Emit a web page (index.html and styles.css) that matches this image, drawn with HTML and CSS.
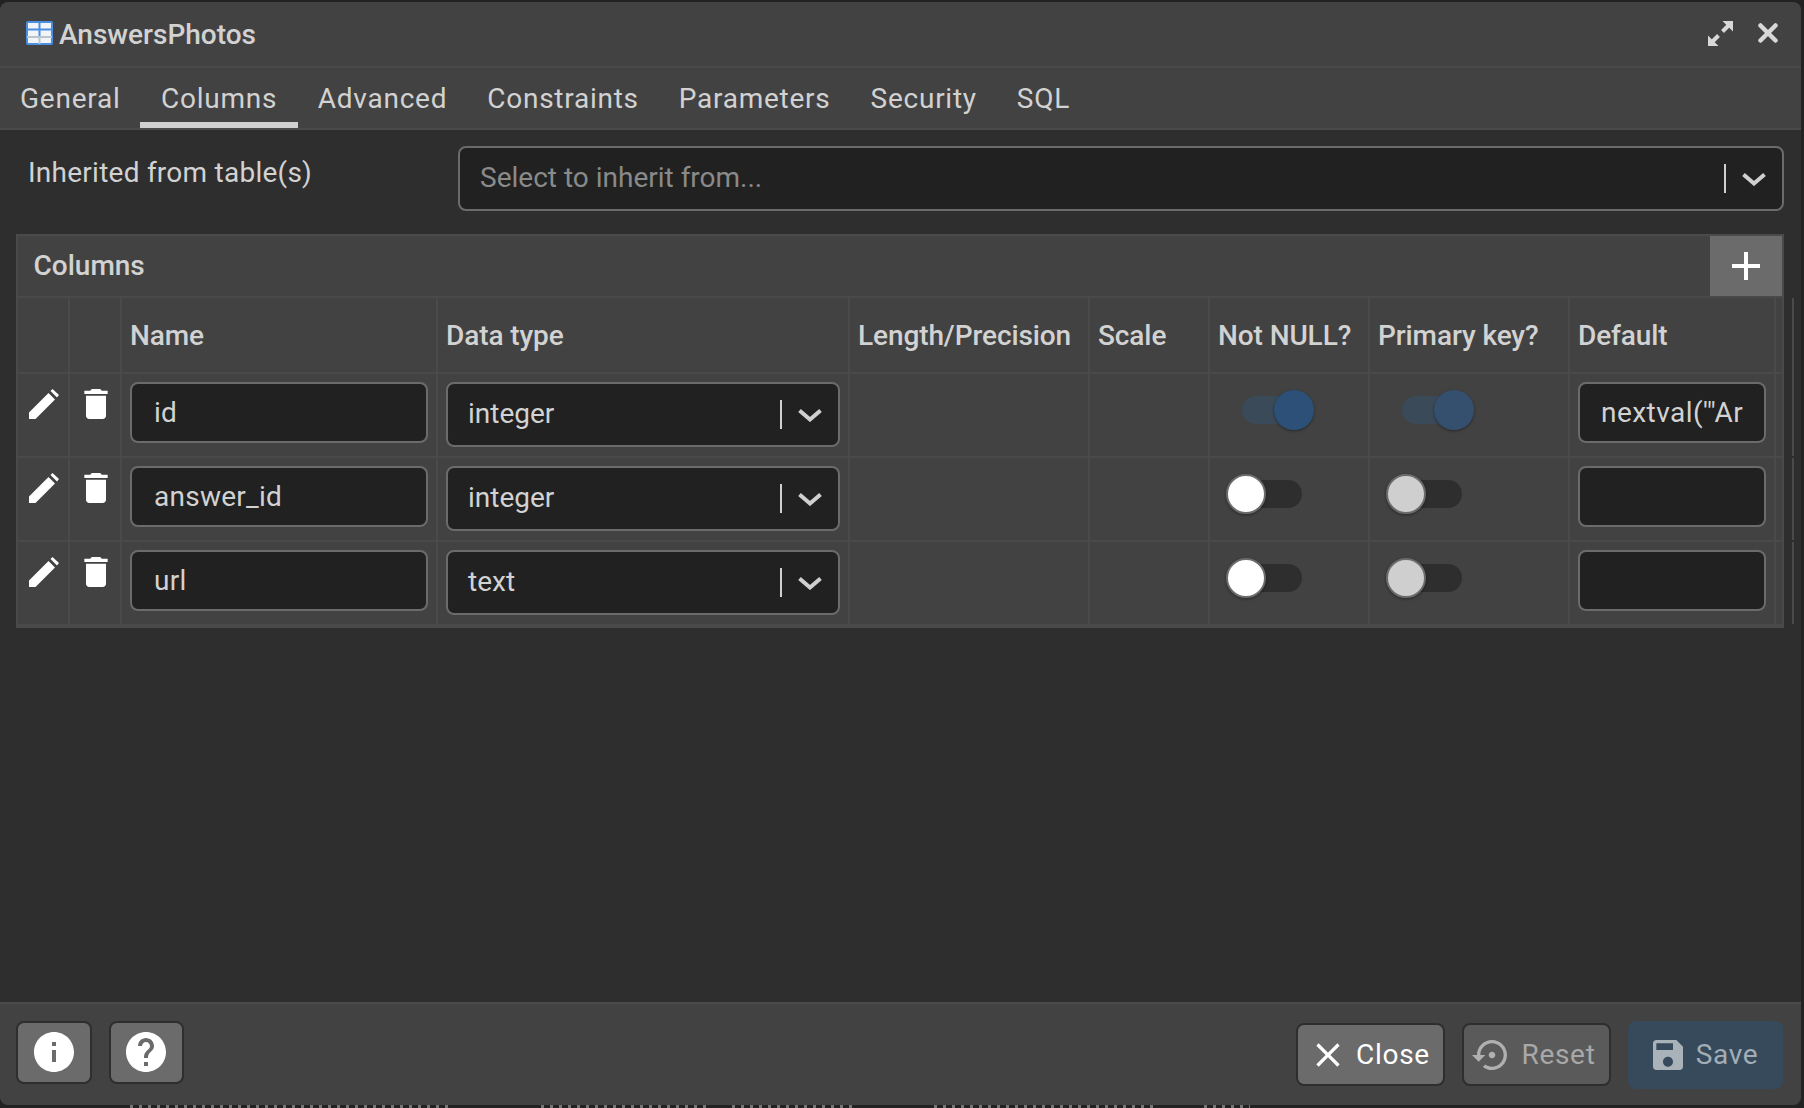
FILE: index.html
```html
<!DOCTYPE html>
<html lang="en">
<head>
  <meta charset="UTF-8">
  <title>AnswersPhotos</title>
  <link rel="stylesheet" href="styles.css">
</head>
<body>
  <div class="dialog">
    <div class="titlebar">
      <svg class="table-icon" viewBox="0 0 27 24"><rect x="1" y="1" width="25" height="22" rx="1" fill="#f2f4f6" stroke="#4a90e2" stroke-width="2"/><path d="M13.500 1v15M1 8.500h25" stroke="#4a90e2" stroke-width="2"/><path d="M1 16h25M13.500 16v7" stroke="#b8c4d0" stroke-width="2"/></svg>
      <span class="title">AnswersPhotos</span>
      <svg class="expand-icon" viewBox="0 0 25 25"><path d="M4 21 10.500 14.500M14.500 10.500 21 4" stroke="#d8d8d8" stroke-width="4"/><path d="M0 25V14.500L10.500 25zM25 0V10.500L14.500 0z" fill="#d8d8d8"/></svg>
      <svg class="close-icon" viewBox="0 0 20 20"><path d="M2.500 2.500 17.500 17.500M17.500 2.500 2.500 17.500" stroke="#d8d8d8" stroke-width="4.500" stroke-linecap="round"/></svg>
    </div>

    <div class="tabs">
      <div class="tab">General</div>
      <div class="tab active">Columns</div>
      <div class="tab">Advanced</div>
      <div class="tab">Constraints</div>
      <div class="tab">Parameters</div>
      <div class="tab">Security</div>
      <div class="tab">SQL</div>
    </div>

    <div class="content">
      <div class="inherit-row">
        <label class="inherit-label">Inherited from table(s)</label>
        <div class="select select-wide">
          <span class="select-text placeholder">Select to inherit from...</span>
          <i class="select-sep"></i>
          <svg class="chevron" viewBox="0 0 24 14"><path d="M1.500 2.500 12 11.500 22.500 2.500" fill="none" stroke="#d0d0d0" stroke-width="4"/></svg>
        </div>
      </div>

      <div class="panel">
        <div class="panel-head">
          <span class="panel-title">Columns</span>
          <button class="add-btn"><svg viewBox="0 0 28 28"><path d="M14 0v28M0 14h28" stroke="#fff" stroke-width="4"/></svg></button>
        </div>

        <div class="grid-row grid-head">
          <div class="cell"></div>
          <div class="cell"></div>
          <div class="cell">Name</div>
          <div class="cell">Data type</div>
          <div class="cell">Length/Precision</div>
          <div class="cell">Scale</div>
          <div class="cell">Not NULL?</div>
          <div class="cell">Primary key?</div>
          <div class="cell">Default</div>
          <div class="cell"></div>
        </div>

        <div class="grid-row">
          <div class="cell icon-cell"><svg class="pencil" viewBox="0 0 30 30"><path d="M0 30V23.500L19.500 4 26 10.500 6.500 30zM21.500 2 23.500 0 30 6 28 8.500z" fill="#fff"/></svg></div>
          <div class="cell icon-cell"><svg class="trash" viewBox="5 3 14 18"><path d="M6 19c0 1.100.9 2 2 2h8c1.100 0 2-.9 2-2V7H6v12zM19 4h-3.500l-1-1h-5l-1 1H5v2h14V4z" fill="#fff"/></svg></div>
          <div class="cell"><div class="input">id</div></div>
          <div class="cell"><div class="select"><span class="select-text">integer</span><i class="select-sep"></i><svg class="chevron" viewBox="0 0 24 14"><path d="M1.500 2.500 12 11.500 22.500 2.500" fill="none" stroke="#d0d0d0" stroke-width="4"/></svg></div></div>
          <div class="cell"></div>
          <div class="cell"></div>
          <div class="cell"><div class="switch on"><i class="thumb"></i></div></div>
          <div class="cell"><div class="switch on pk"><i class="thumb"></i></div></div>
          <div class="cell"><div class="input input-default">nextval('"Ar</div></div>
          <div class="cell"></div>
        </div>

        <div class="grid-row">
          <div class="cell icon-cell"><svg class="pencil" viewBox="0 0 30 30"><path d="M0 30V23.500L19.500 4 26 10.500 6.500 30zM21.500 2 23.500 0 30 6 28 8.500z" fill="#fff"/></svg></div>
          <div class="cell icon-cell"><svg class="trash" viewBox="5 3 14 18"><path d="M6 19c0 1.100.9 2 2 2h8c1.100 0 2-.9 2-2V7H6v12zM19 4h-3.500l-1-1h-5l-1 1H5v2h14V4z" fill="#fff"/></svg></div>
          <div class="cell"><div class="input">answer_id</div></div>
          <div class="cell"><div class="select"><span class="select-text">integer</span><i class="select-sep"></i><svg class="chevron" viewBox="0 0 24 14"><path d="M1.500 2.500 12 11.500 22.500 2.500" fill="none" stroke="#d0d0d0" stroke-width="4"/></svg></div></div>
          <div class="cell"></div>
          <div class="cell"></div>
          <div class="cell"><div class="switch"><i class="thumb"></i></div></div>
          <div class="cell"><div class="switch pk"><i class="thumb"></i></div></div>
          <div class="cell"><div class="input input-default"></div></div>
          <div class="cell"></div>
        </div>

        <div class="grid-row">
          <div class="cell icon-cell"><svg class="pencil" viewBox="0 0 30 30"><path d="M0 30V23.500L19.500 4 26 10.500 6.500 30zM21.500 2 23.500 0 30 6 28 8.500z" fill="#fff"/></svg></div>
          <div class="cell icon-cell"><svg class="trash" viewBox="5 3 14 18"><path d="M6 19c0 1.100.9 2 2 2h8c1.100 0 2-.9 2-2V7H6v12zM19 4h-3.500l-1-1h-5l-1 1H5v2h14V4z" fill="#fff"/></svg></div>
          <div class="cell"><div class="input">url</div></div>
          <div class="cell"><div class="select"><span class="select-text">text</span><i class="select-sep"></i><svg class="chevron" viewBox="0 0 24 14"><path d="M1.500 2.500 12 11.500 22.500 2.500" fill="none" stroke="#d0d0d0" stroke-width="4"/></svg></div></div>
          <div class="cell"></div>
          <div class="cell"></div>
          <div class="cell"><div class="switch"><i class="thumb"></i></div></div>
          <div class="cell"><div class="switch pk"><i class="thumb"></i></div></div>
          <div class="cell"><div class="input input-default"></div></div>
          <div class="cell"></div>
        </div>
      </div>
    </div>

    <div class="footer">
      <button class="btn square"><svg viewBox="2 2 20 20"><path d="M12 2C6.480 2 2 6.480 2 12s4.480 10 10 10 10-4.480 10-10S17.520 2 12 2zm1 15h-2v-6h2v6zm0-8h-2V7h2v2z" fill="#fff"/></svg></button>
      <button class="btn square help"><svg viewBox="2 2 20 20"><path d="M12 2C6.480 2 2 6.480 2 12s4.480 10 10 10 10-4.480 10-10S17.520 2 12 2zm1 17h-2v-2h2v2zm2.070-7.750-.9.920C13.450 12.900 13 13.500 13 15h-2v-.5c0-1.100.450-2.100 1.170-2.830l1.240-1.260c.370-.360.590-.860.590-1.410 0-1.100-.9-2-2-2s-2 .9-2 2H8c0-2.210 1.790-4 4-4s4 1.790 4 4c0 .880-.360 1.680-.930 2.250z" fill="#fff"/></svg></button>
      <div class="spacer"></div>
      <button class="btn action"><svg class="btn-icon" viewBox="0 0 24 24"><path d="M19 6.410 17.590 5 12 10.590 6.410 5 5 6.410 10.590 12 5 17.590 6.410 19 12 13.410 17.590 19 19 17.590 13.410 12z" fill="#fff"/></svg>Close</button>
      <button class="btn action reset"><svg class="btn-icon" viewBox="0 0 24 24"><path d="M14 12c0-1.100-.9-2-2-2s-2 .9-2 2 .9 2 2 2 2-.9 2-2zm-2-9c-4.970 0-9 4.030-9 9H0l4 4 4-4H5c0-3.870 3.130-7 7-7s7 3.130 7 7-3.130 7-7 7c-1.510 0-2.910-.490-4.060-1.300l-1.420 1.440C8.040 20.300 9.940 21 12 21c4.970 0 9-4.030 9-9s-4.030-9-9-9z" fill="#b0b0b0"/></svg>Reset</button>
      <button class="btn action save"><svg class="btn-icon" viewBox="0 0 24 24"><path d="M17 3H5c-1.110 0-2 .9-2 2v14c0 1.100.890 2 2 2h14c1.100 0 2-.9 2-2V7l-4-4zm-5 16c-1.660 0-3-1.340-3-3s1.340-3 3-3 3 1.340 3 3-1.340 3-3 3zm3-10H5V5h10v4z" fill="#a9b2b9"/></svg>Save</button>
    </div>
  </div>

  <!-- bits of the page behind the dialog -->
  <div class="behind">
    <i class="behind-bit bit-a"></i>
    <i class="behind-bit bit-b"></i>
    <i class="behind-bit bit-c"></i>
    <i class="behind-bit bit-d"></i>
    <i class="behind-bit bit-e"></i>
  </div>
</body>
</html>
```

FILE: styles.css
```css
* {
  box-sizing: border-box;
}
html, body {
  margin: 0;
  height: 100%;
}
body {
  background: #222222;
  font-family: Roboto, sans-serif;
  font-size: 28px;
  color: #d2d2d2;
  overflow: hidden;
  padding: 2px 3px 0 0;
}
.dialog {
  height: 1103px;
  display: flex;
  flex-direction: column;
  background: #2e2e2e;
  border-radius: 8px;
  overflow: hidden;
}
/* Title */
.titlebar {
  height: 66px;
  flex: none;
  display: flex;
  align-items: center;
  background: #424242;
  border-bottom: 2px solid #4a4a4a;
  padding: 0 23px 2px 26px;
}
.table-icon {
  width: 27px;
  height: 24px;
  margin-right: 6px;
}
.title {
  font-weight: 500;
  flex: 1;
  padding-top: 2px;
}
.expand-icon {
  width: 25px;
  height: 25px;
  margin-right: 25px;
}
.close-icon {
  width: 20px;
  height: 20px;
}
/* Tabs */
.tabs {
  height: 62px;
  flex: none;
  display: flex;
  background: #424242;
  border-bottom: 2px solid #4a4a4a;
}
.tab {
  height: 60px;
  padding: 1px 20px 0;
  line-height: 60px;
  letter-spacing: 0.75px;
}
.tab.active {
  border-bottom: 6px solid #d0d0d0;
  padding: 1px 20.600px 0;
}
/* Form */
.content {
  flex: 1;
  padding: 16px 17px 0 16px;
}
.inherit-row {
  display: flex;
  height: 88px;
}
.inherit-label {
  width: 442px;
  padding: 9px 0 0 12px;
  line-height: 36px;
  letter-spacing: 0.25px;
}
.select {
  height: 65px;
  display: flex;
  align-items: center;
  background: #212121;
  border: 2px solid #6b6b6b;
  border-radius: 8px;
  padding: 0 16px 0 20px;
}
.select-wide {
  flex: 1;
}
.select-text {
  flex: 1;
  margin-top: -2px;
}
.placeholder {
  color: #8a8a8a;
}
.select-sep {
  width: 2px;
  height: 29px;
  background: #d0d0d0;
  margin-right: 16px;
}
.chevron {
  width: 24px;
  height: 14px;
}
/* Columns panel */
.panel {
  border: 2px solid #4a4a4a;
  background: #424242;
}
.panel-head {
  height: 62px;
  display: flex;
  align-items: center;
  justify-content: space-between;
  border-bottom: 2px solid #4a4a4a;
  padding-left: 15.500px;
}
.panel-title {
  font-weight: 500;
  margin-top: -2px;
}
.add-btn {
  width: 72px;
  height: 60px;
  border: none;
  padding: 0;
  background: #6b6b6b;
  display: flex;
  align-items: center;
  justify-content: center;
}
.add-btn svg {
  width: 28px;
  height: 28px;
}
.grid-row {
  display: grid;
  grid-template-columns: 52px 52px 316px 412px 240px 120px 160px 200px 206px 6px;
  height: 84px;
  border-bottom: 2px solid #4a4a4a;
}
.grid-head {
  height: 76px;
  font-weight: 500;
  letter-spacing: -0.1px;
}
.cell {
  border-right: 2px solid #4a4a4a;
  padding: 8px 8px 0;
  min-width: 0;
}
.grid-head .cell {
  line-height: 76px;
  white-space: nowrap;
  padding-top: 0;
}
.icon-cell {
  padding: 15px 0 0 2px;
  display: flex;
  justify-content: center;
}
.pencil {
  width: 30px;
  height: 30px;
}
.trash {
  width: 24px;
  height: 30px;
}
.input {
  height: 61px;
  line-height: 57px;
  background: #212121;
  border: 2px solid #6b6b6b;
  border-radius: 8px;
  padding: 0 22px;
  white-space: nowrap;
  letter-spacing: 0.25px;
}
.input-default {
  padding: 0 21px;
  letter-spacing: 0.45px;
}
/* Switches */
.switch {
  position: relative;
  width: 74px;
  height: 28px;
  margin: 14px 0 0 10px;
  border-radius: 14px;
  background: #2e2e2e;
}
.thumb {
  position: absolute;
  left: -2px;
  top: -6px;
  width: 40px;
  height: 40px;
  border-radius: 50%;
  background: #fff;
  border: 2px solid #6b6b6b;
  box-shadow: 0 1px 3px rgba(0, 0, 0, 0.4);
}
.switch.pk .thumb {
  background: #cfcfcf;
}
.switch.on {
  width: 62px;
  margin-left: 24px;
  background: #3a4a58;
}
.switch.on .thumb {
  left: auto;
  right: -10px;
  border: none;
  background: #2c5078;
}
.switch.on.pk .thumb {
  background: #34506e;
}
/* Footer */
.footer {
  height: 103px;
  flex: none;
  display: flex;
  align-items: center;
  background: #424242;
  border-top: 2px solid #4a4a4a;
  padding: 0 18px 0 16px;
}
.spacer {
  flex: 1;
}
.btn {
  display: flex;
  align-items: center;
  justify-content: center;
  font-family: inherit;
  font-size: 28px;
  letter-spacing: 0.7px;
  background: #6b6b6b;
  color: #fff;
  border: 2px solid #2e2e2e;
  border-radius: 8px;
  padding: 0;
}
.square {
  width: 75.500px;
  height: 63px;
  margin-bottom: 5px;
}
.help {
  margin-left: 17px;
}
.square svg {
  width: 40px;
  height: 40px;
}
.action {
  height: 63px;
  width: 149px;
  margin-left: 17px;
}
.btn-icon {
  width: 40px;
  height: 40px;
  margin: 0 8px 0 -3px;
}
.reset {
  background: #5a5a5a;
  color: #a8a8a8;
}
.reset .btn-icon {
  margin: 0 9px 0 -5px;
}
.save {
  width: 155px;
  height: 68px;
  background: #364a5c;
  border: none;
  color: #a3adb5;
}
.save .btn-icon {
  margin: 0 8px 0 -5px;
}
.behind {
  display: flex;
  height: 3px;
  overflow: hidden;
}
.behind-bit {
  height: 3px;
  background: repeating-linear-gradient(90deg, #777777 0 3px, #222222 3px 9px);
}
.bit-a {
  width: 323px;
  margin-left: 130px;
}
.bit-b {
  width: 166px;
  margin-left: 88px;
}
.bit-c {
  width: 123px;
  margin-left: 25px;
}
.bit-d {
  width: 219px;
  margin-left: 79px;
}
.bit-e {
  width: 46px;
  margin-left: 51px;
}
```
